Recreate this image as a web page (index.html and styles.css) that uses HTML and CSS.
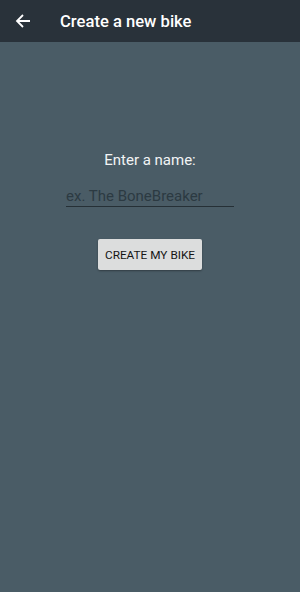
FILE: index.html
```html
<!DOCTYPE html>
<html>
    <head>
        <title>Create a new bike</title>
        <link rel="stylesheet" href="styles.css">
    </head>
    <body>
        <header class="toolbar">
            <button class="back-button">
                <svg width="16" height="16" viewBox="0 0 16 16">
                    <path d="M15 8H2M8 2L2 8l6 6" fill="none" stroke="#fff" stroke-width="1.8"/>
                </svg>
            </button>
            <p class="title">Create a new bike</p>
        </header>
        <main class="content">
            <p class="label">Enter a name:</p>
            <input class="name-input" type="text" placeholder="ex. The BoneBreaker">
            <button class="create-button">CREATE MY BIKE</button>
        </main>
    </body>
</html>
```

FILE: styles.css
```css
body {
    margin: 0;
    height: 592px;
    background-color: #4a5c66;
    font-family: Roboto, "Noto Sans", sans-serif;
}

.toolbar {
    height: 42px;
    background-color: #29323a;
    display: flex;
    align-items: center;
}

.back-button {
    background: none;
    border: none;
    padding: 0;
    margin-left: 15px;
    width: 16px;
    height: 16px;
    display: flex;
}

.title {
    margin: 0 0 0 29px;
    color: white;
    font-size: 16.6px;
    font-weight: 500;
}

.content {
    display: flex;
    flex-direction: column;
    align-items: center;
    padding-top: 108px;
}

.label {
    margin: 0;
    color: #f2f4f5;
    font-size: 15px;
    line-height: 20px;
}

.name-input {
    margin-top: 15px;
    width: 168px;
    box-sizing: border-box;
    background: none;
    border: none;
    border-bottom: 1px solid #263036;
    padding: 1px 0 0 0;
    font-family: Roboto, sans-serif;
    font-size: 15px;
    line-height: 20px;
    height: 22px;
    color: #263036;
    outline: none;
}

.name-input::placeholder {
    color: #2c3a42;
}

.create-button {
    margin-top: 32px;
    width: 104px;
    height: 31px;
    background-color: #dcdddd;
    border: none;
    border-radius: 2px;
    box-shadow: 0 1px 2px rgba(0, 0, 0, 0.35);
    font-family: Roboto, sans-serif;
    font-size: 11.8px;
    color: #151515;
    padding: 0;
}
```
